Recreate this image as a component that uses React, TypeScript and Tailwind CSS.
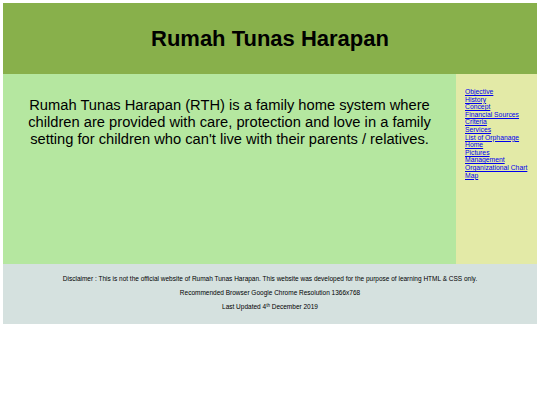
// Static landing page for Rumah Tunas Harapan: header, intro text, side nav and footer.

const links = [
  "Objective",
  "History",
  "Concept",
  "Financial Sources",
  "Criteria",
  "Services",
  "List of Orphanage",
  "Home",
  "Pictures",
  "Management",
  "Organizational Chart",
  "Map",
];

export default function App() {
  return (
    <div className="min-h-[405px] bg-white px-[3px] pt-[3px] font-['Liberation_Sans',Arial,sans-serif] text-black">
      <header className="flex h-[71px] items-center justify-center bg-[#88b04b]">
        <h1 className="text-[22px] font-bold leading-none">Rumah Tunas Harapan</h1>
      </header>

      <div className="flex h-[190px]">
        <main className="flex-1 bg-[#b5e7a0] px-4 pt-[23px] text-center">
          <p className="text-[14.7px] leading-[17px]">
            Rumah Tunas Harapan (RTH) is a family home system where children are provided with care,
            protection and love in a family setting for children who can't live with their parents /
            relatives.
          </p>
        </main>
        <nav className="w-[81px] bg-[#e3eaa7] pl-[9px] pt-[14px]">
          <ul className="text-[6.8px] leading-[7.6px]">
            {links.map((l) => (
              <li key={l}>
                <a href="#" className="whitespace-nowrap text-[#0000ee] underline">
                  {l}
                </a>
              </li>
            ))}
          </ul>
        </nav>
      </div>

      <footer className="flex flex-col gap-[6px] bg-[#d5e1df] pb-[13px] pt-[11px] text-center text-[6.5px] leading-[8px]">
        <p>
          Disclaimer : This is not the official website of Rumah Tunas Harapan. This website was
          developed for the purpose of learning HTML &amp; CSS only.
        </p>
        <p>Recommended Browser Google Chrome Resolution 1366x768</p>
        <p>
          Last Updated 4<sup className="text-[4.5px]">th</sup> December 2019
        </p>
      </footer>
    </div>
  );
}
